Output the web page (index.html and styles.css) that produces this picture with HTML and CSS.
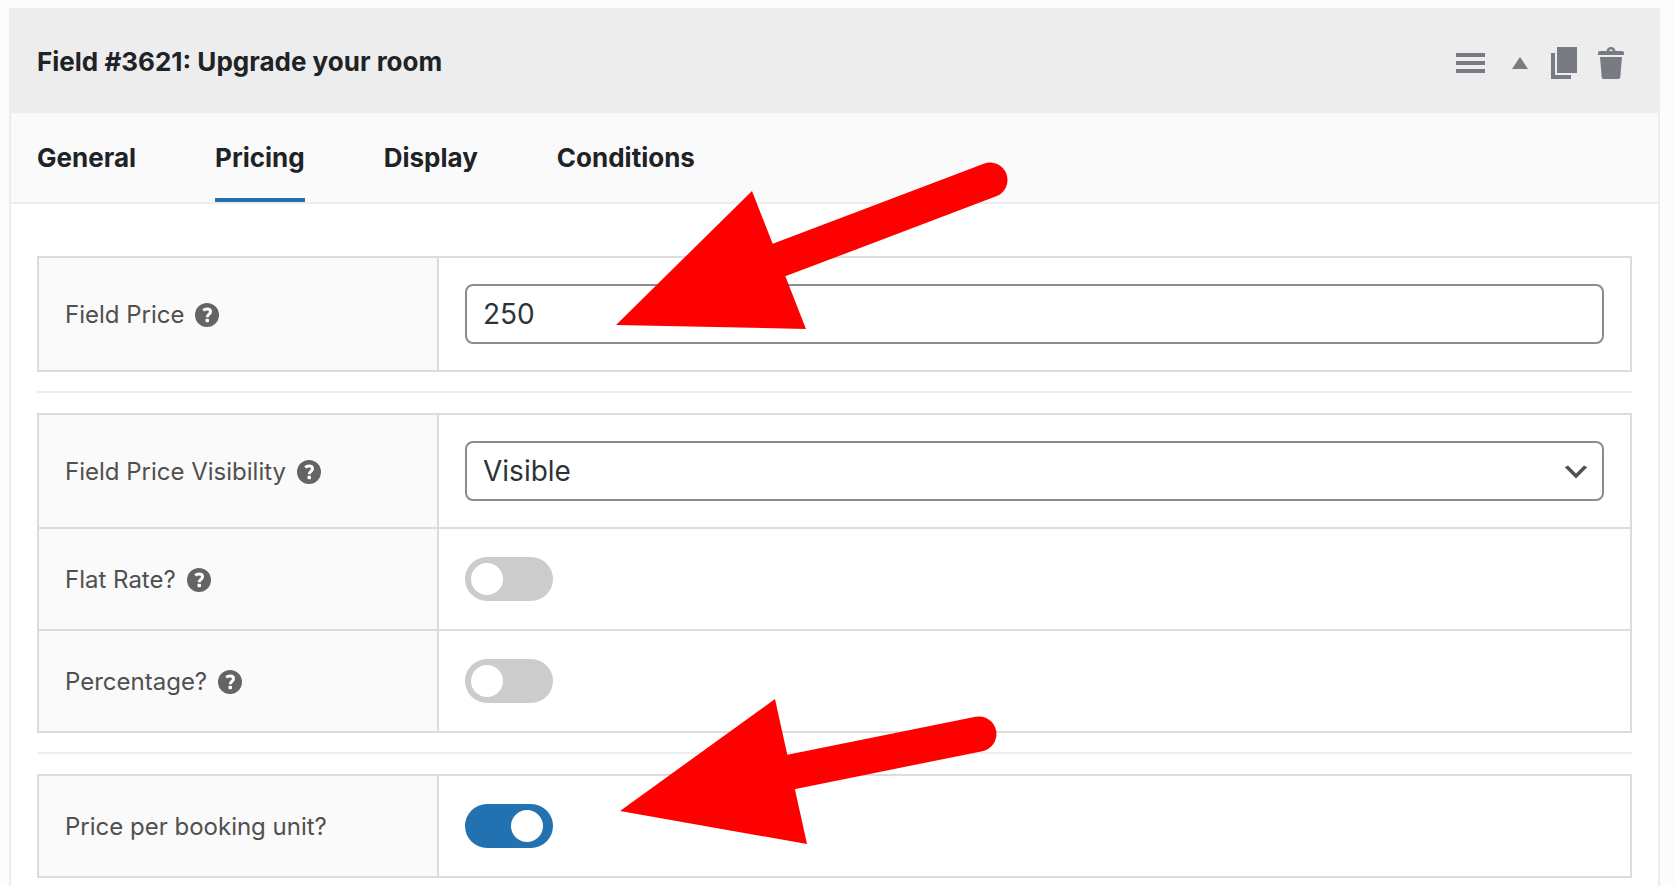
FILE: index.html
```html
<!DOCTYPE html>
<html lang="en">
<head>
  <meta charset="UTF-8">
  <meta name="viewport" content="width=device-width, initial-scale=1.0">
  <title>Field #3621: Upgrade your room</title>
  <link rel="stylesheet" href="styles.css">
</head>
<body>
  <svg class="sprite" aria-hidden="true">
    <symbol id="icon-help" viewBox="0 0 24 24">
      <circle cx="12" cy="12" r="12" fill="#646464"/>
      <path d="M8.200 7.400C9.200 6.600 10.500 6.100 12 6.100c2.200 0 3.500 1 3.500 2.700 0 2.500-3.300 2.700-3.300 5.400" fill="none" stroke="#fff" stroke-width="3"/>
      <rect x="10.500" y="15.800" width="3.500" height="3.500" rx="1" fill="#fff"/>
    </symbol>
  </svg>

  <div class="field-panel">
    <div class="field-header">
      <h1>Field #3621: Upgrade your room</h1>
      <div class="field-actions">
        <button type="button" class="action-btn action-move" aria-label="Reorder">
          <svg width="29" height="20" viewBox="0 0 29 20"><path d="M0 0h29v4H0zM0 8h29v4H0zM0 16h29v4H0z"/></svg>
        </button>
        <button type="button" class="action-btn action-toggle" aria-label="Collapse">
          <svg width="16" height="12" viewBox="0 0 16 12"><path d="M8 0l8 12H0z"/></svg>
        </button>
        <button type="button" class="action-btn action-copy" aria-label="Duplicate">
          <svg width="26" height="32" viewBox="0 0 26 32"><path d="M6 0h20v26H6zM0 6h4v22h16v4H0z"/></svg>
        </button>
        <button type="button" class="action-btn" aria-label="Delete">
          <svg width="26" height="32" viewBox="0 0 26 32"><path d="M8.500 4C9 1.500 10.500 0 13 0s4 1.500 4.500 4H24c1.200 0 2 .8 2 2v2H0V6c0-1.200.8-2 2-2zM11 4h4c-.3-1-.9-1.600-2-1.600S11.300 3 11 4zM2 10h22l-1.700 20c-.1 1.200-.8 2-2 2H5.700c-1.200 0-1.900-.8-2-2z"/></svg>
        </button>
      </div>
    </div>

    <nav class="field-tabs">
      <a href="#general">General</a>
      <a href="#pricing" class="active">Pricing</a>
      <a href="#display">Display</a>
      <a href="#conditions">Conditions</a>
    </nav>

    <form class="field-body" id="pricing">
      <div class="settings-group">
        <div class="setting-row">
          <div class="setting-label">
            <label for="price">Field Price</label>
            <svg class="help-icon"><use href="#icon-help"/></svg>
          </div>
          <div class="setting-value">
            <input type="text" id="price" class="text-input" value="250">
          </div>
        </div>
      </div>

      <hr>

      <div class="settings-group">
        <div class="setting-row">
          <div class="setting-label">
            <label for="visibility">Field Price Visibility</label>
            <svg class="help-icon"><use href="#icon-help"/></svg>
          </div>
          <div class="setting-value">
            <div class="select-wrap">
              <select id="visibility" class="text-input">
                <option>Visible</option>
                <option>Hidden</option>
              </select>
              <svg class="select-arrow" viewBox="0 0 20 20"><path d="M5 6l5 5 5-5 2 1-7 7-7-7 2-1z" fill="#505050"/></svg>
            </div>
          </div>
        </div>
        <div class="setting-row">
          <div class="setting-label">
            <label for="flat-rate">Flat Rate?</label>
            <svg class="help-icon"><use href="#icon-help"/></svg>
          </div>
          <div class="setting-value">
            <input type="checkbox" id="flat-rate" class="switch">
          </div>
        </div>
        <div class="setting-row">
          <div class="setting-label">
            <label for="percentage">Percentage?</label>
            <svg class="help-icon"><use href="#icon-help"/></svg>
          </div>
          <div class="setting-value">
            <input type="checkbox" id="percentage" class="switch">
          </div>
        </div>
      </div>

      <hr>

      <div class="settings-group">
        <div class="setting-row">
          <div class="setting-label">
            <label for="per-unit">Price per booking unit?</label>
          </div>
          <div class="setting-value">
            <input type="checkbox" id="per-unit" class="switch" checked>
          </div>
        </div>
      </div>
    </form>
  </div>

  <!-- arrows pointing at the two settings to change -->
  <svg class="arrow arrow-price" width="420" height="190" viewBox="0 0 420 190" aria-hidden="true">
    <path d="M179 110L390 30" stroke="#f00" stroke-width="35" stroke-linecap="round"/>
    <path d="M16 175L152 41l54 138z" fill="#f00"/>
  </svg>
  <svg class="arrow arrow-unit" width="420" height="160" viewBox="0 0 420 160" aria-hidden="true">
    <path d="M191 82L379 44" stroke="#f00" stroke-width="35" stroke-linecap="round"/>
    <path d="M20 121L175 9l32 145z" fill="#f00"/>
  </svg>
</body>
</html>
```

FILE: styles.css
```css
* {
  box-sizing: border-box;
}

body {
  position: relative;
  margin: 0;
  padding: 8px 14px 0 9px;
  background: #fcfcfc;
  color: #1d2327;
  font-family: Inter, "Liberation Sans", sans-serif;
}

.sprite {
  display: none;
}

.field-panel {
  min-height: calc(100vh - 8px);
  background: #fff;
  border: 2px solid #ededed;
  border-bottom: none;
}

.field-header {
  display: flex;
  justify-content: space-between;
  align-items: center;
  height: 103px;
  padding: 0 34px 0 26px;
  background: #ededed;
}

.field-header h1 {
  margin: 0;
  font-size: 26px;
  font-weight: 700;
}

.field-actions {
  display: flex;
  align-items: center;
  padding-top: 2px;
}

.action-btn {
  display: flex;
  padding: 0;
  border: none;
  background: none;
  cursor: pointer;
}

.action-btn svg {
  fill: #787c82;
}

.action-move {
  margin-right: 27px;
}

.action-toggle {
  margin-right: 23px;
}

.action-copy {
  margin-right: 21px;
}

.field-tabs {
  display: flex;
  gap: 79px;
  height: 91px;
  padding: 0 26px;
  background: #fafafa;
  border-bottom: 2px solid #ededed;
}

.field-tabs a {
  padding-top: 29px;
  border-bottom: 4px solid transparent;
  color: #1d2327;
  font-size: 26px;
  font-weight: 700;
  line-height: 32px;
  text-decoration: none;
}

.field-tabs a.active {
  border-bottom-color: #2271b1;
}

.field-body {
  padding: 52px 26px 8px;
}

.field-body hr {
  margin: 19px 0 20px;
  border: none;
  border-top: 2px solid #eee;
}

.settings-group {
  border: 2px solid #dcdcdc;
}

.setting-row {
  display: flex;
  min-height: 100px;
}

.setting-row + .setting-row {
  border-top: 2px solid #dcdcdc;
  min-height: 102px;
}

.setting-label {
  display: flex;
  align-items: center;
  gap: 11px;
  flex: 0 0 400px;
  padding: 2px 26px 0;
  background: #fafafa;
  border-right: 2px solid #dcdcdc;
  color: #505050;
  font-size: 24px;
  line-height: 28px;
}

.help-icon {
  width: 24px;
  height: 24px;
}

.setting-value {
  display: flex;
  align-items: center;
  flex: 1;
  padding: 26px;
}

.text-input {
  display: block;
  width: 100%;
  height: 60px;
  padding: 0 16px;
  border: 2px solid #8c8c8c;
  border-radius: 8px;
  background: #fff;
  color: #2c3338;
  font-family: inherit;
  font-size: 28px;
  appearance: none;
}

.select-wrap {
  position: relative;
  flex: 1;
}

.select-arrow {
  position: absolute;
  top: 15px;
  right: 12px;
  width: 32px;
  height: 32px;
  pointer-events: none;
}

.switch {
  appearance: none;
  display: flex;
  width: 88px;
  height: 44px;
  margin: 0;
  padding: 6px;
  border-radius: 22px;
  background: #ccc;
  cursor: pointer;
}

.switch::before {
  content: "";
  width: 32px;
  height: 32px;
  border-radius: 50%;
  background: #fff;
}

.switch:checked {
  justify-content: flex-end;
  padding-right: 10px;
  background: #2271b1;
}

.arrow {
  position: absolute;
  left: 600px;
  pointer-events: none;
}

.arrow-price {
  top: 150px;
}

.arrow-unit {
  top: 690px;
}
```
